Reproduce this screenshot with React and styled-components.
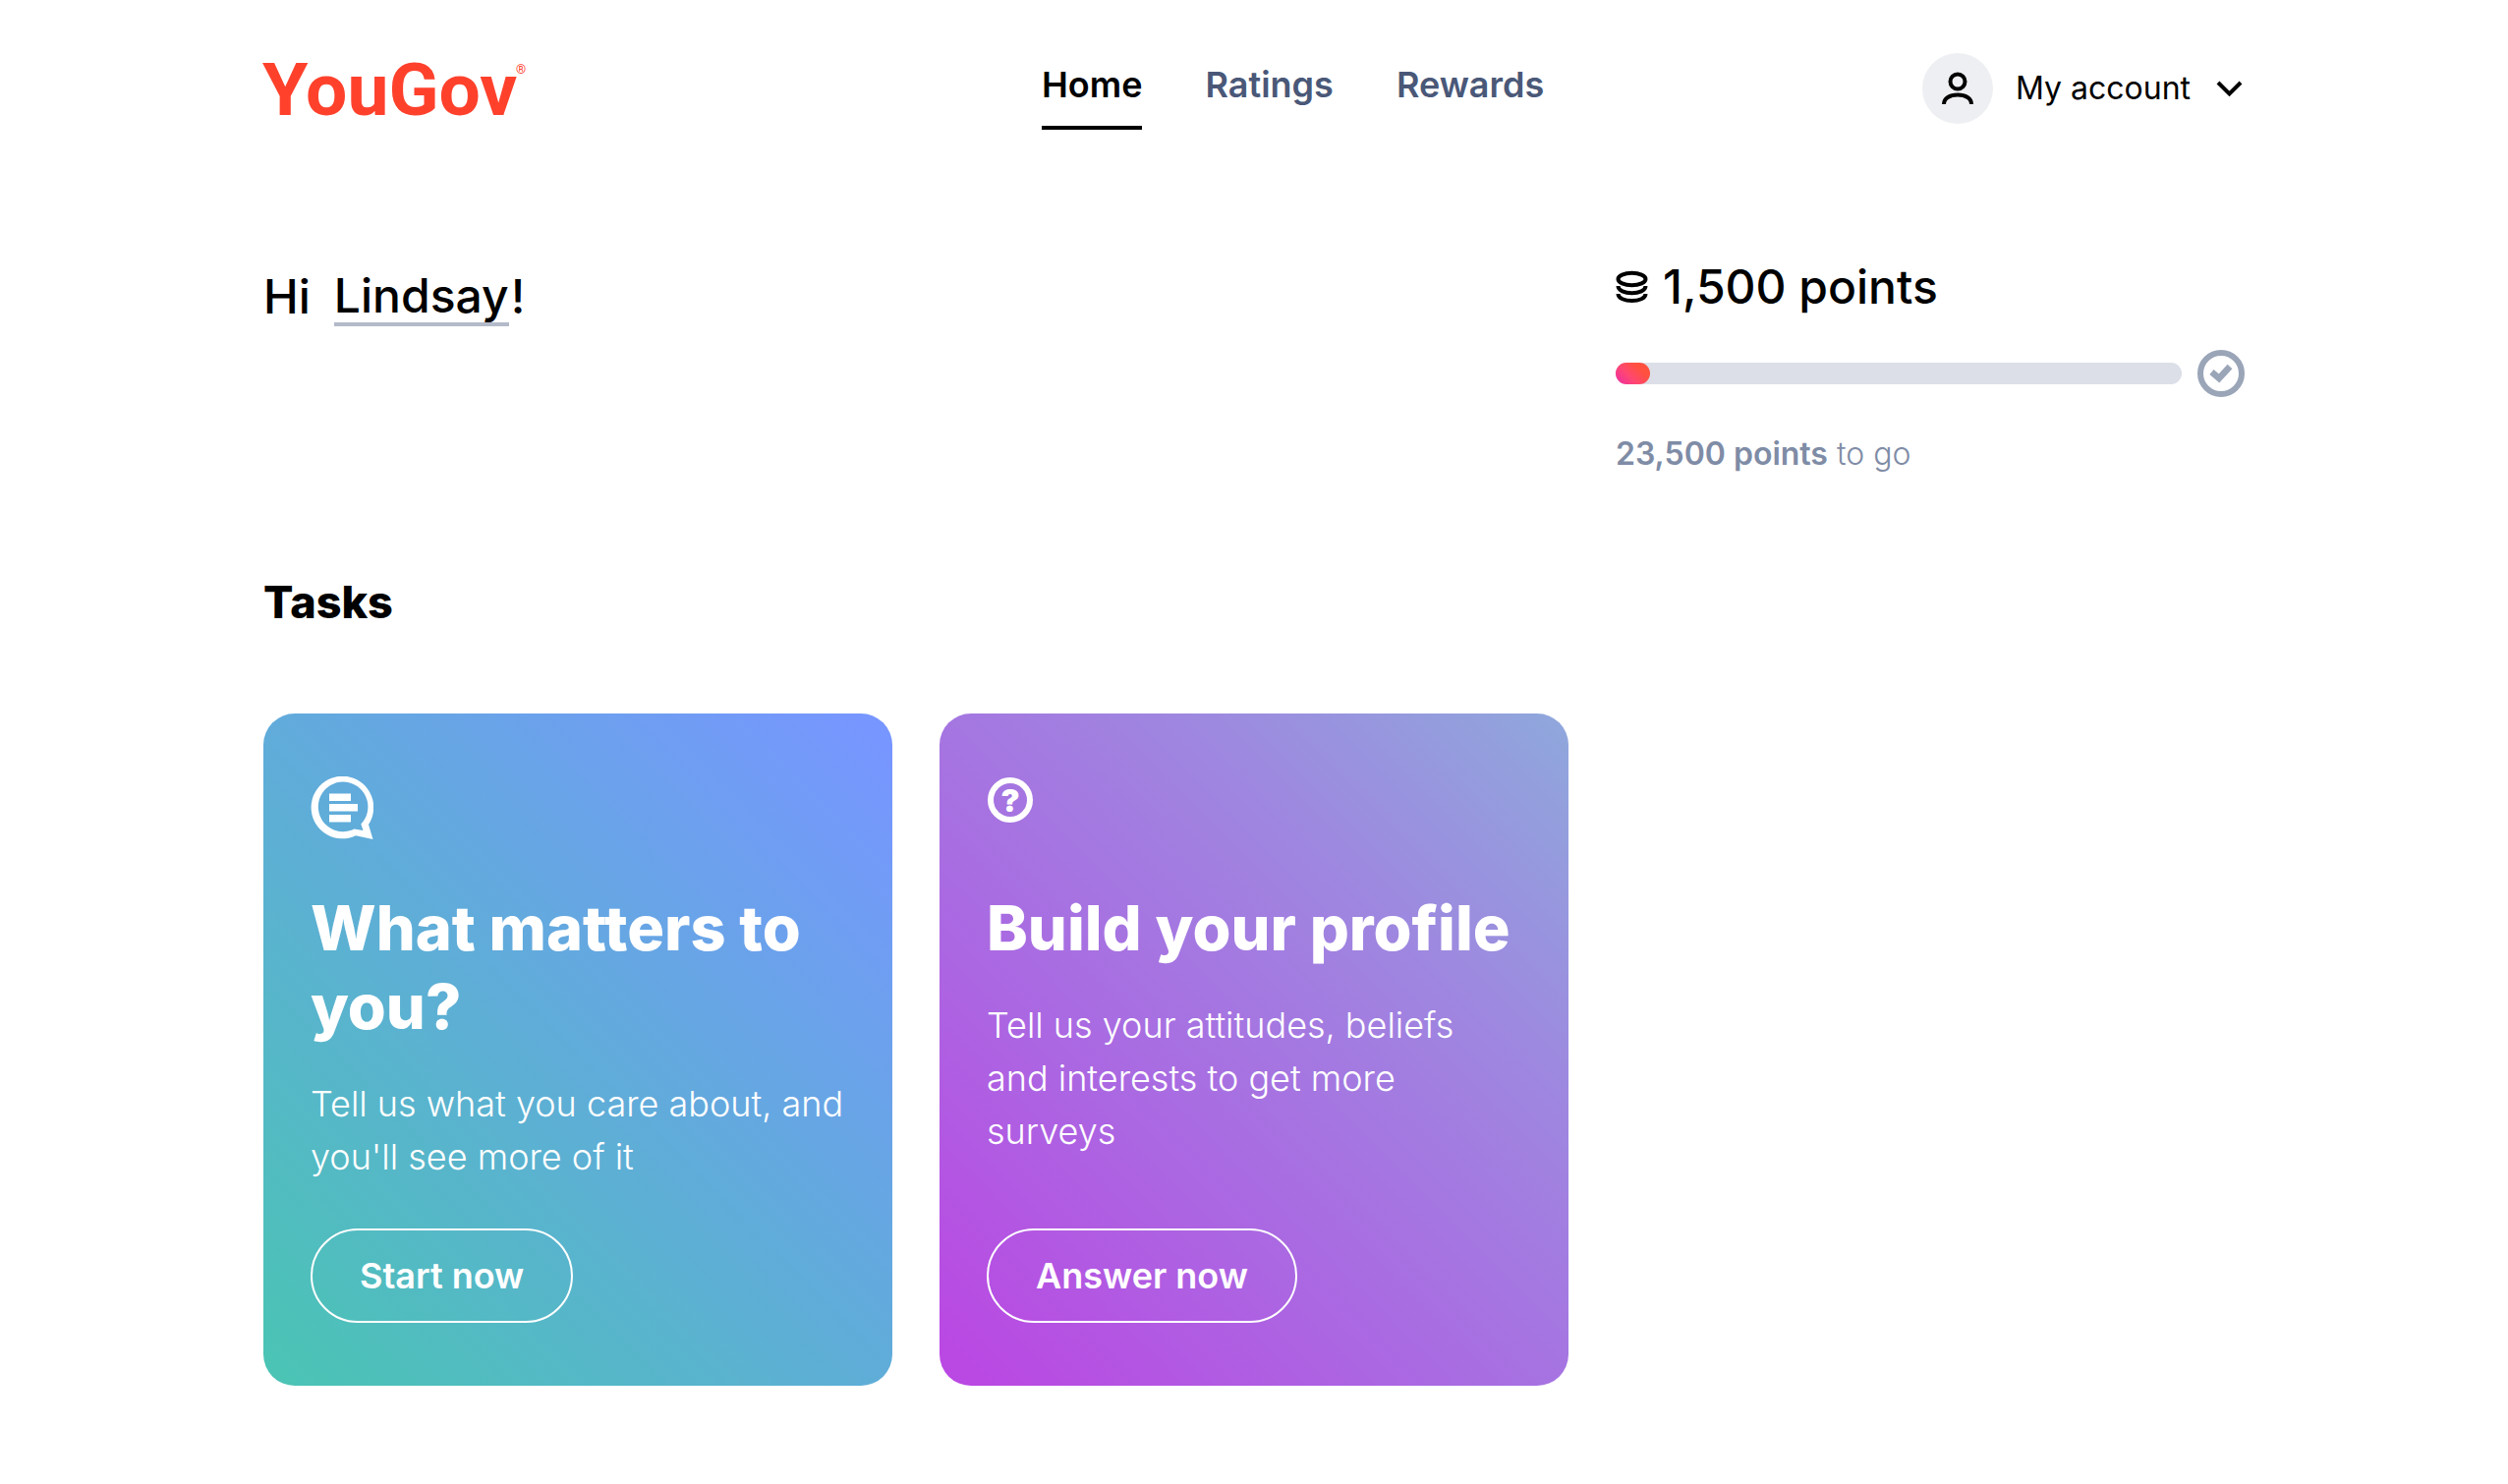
import React, { useState } from "react";
import styled, { createGlobalStyle } from "styled-components";

const GlobalStyle = createGlobalStyle`
  *, *::before, *::after { box-sizing: border-box; }
  body {
    margin: 0;
    background: #fff;
    color: #000;
    font-family: Inter, "Liberation Sans", Arial, sans-serif;
  }
  h1, h2, h3, p { margin: 0; }
  button, input { font-family: inherit; }
`;

const Page = styled.div`
  max-width: 2112px;
  margin: 0 auto;
  padding: 0 48px 100px;
`;

const Header = styled.header`
  display: grid;
  grid-template-columns: 10fr auto 9fr;
  align-items: center;
  height: 180px;
`;

const LogoLink = styled.a`
  justify-self: start;
  color: #ff412c;

  svg { display: block; }
`;

const Nav = styled.nav`
  display: flex;
  gap: 64px;
  padding-top: 16px;
`;

const NavLink = styled.a`
  padding: 0 0 20px;
  border-bottom: 4px solid ${({ $active }) => ($active ? "#000" : "transparent")};
  color: ${({ $active }) => ($active ? "#000" : "#4a5878")};
  font-size: 36px;
  font-weight: 600;
  line-height: 44px;
  text-decoration: none;
`;

const AccountButton = styled.button`
  display: flex;
  align-items: center;
  justify-self: end;
  gap: 23px;
  padding: 0;
  border: 0;
  background: none;
  color: #000;
  font-size: 32px;
  line-height: 48px;
  cursor: pointer;
`;

const Avatar = styled.span`
  display: grid;
  place-items: center;
  width: 72px;
  height: 72px;
  border-radius: 50%;
  background: #eeeff2;
`;

const Columns = styled.div`
  display: grid;
  grid-template-columns: repeat(3, minmax(0, 1fr));
  gap: 48px;
`;

const Summary = styled(Columns)`
  padding-top: 84px;
`;

const Greeting = styled.h1`
  display: flex;
  align-self: start;
  grid-column: span 2;
  padding-top: 8px;
  font-size: 48px;
  font-weight: 500;
  line-height: 60px;
`;

const NameInput = styled.input`
  width: 178px;
  height: 60px;
  margin: 0 2px 0 24px;
  padding: 0;
  border: 0;
  border-bottom: 4px solid #b3bac9;
  outline: none;
  background: none;
  color: inherit;
  font-size: inherit;
  font-weight: inherit;
`;

const PointsTotal = styled.h2`
  display: flex;
  align-items: center;
  gap: 14px;
  font-size: 48px;
  font-weight: 500;
  line-height: 56px;
`;

const ProgressRow = styled.div`
  display: flex;
  align-items: center;
  gap: 16px;
  margin-top: 36px;
`;

const Track = styled.div`
  flex: 1;
  height: 22px;
  border-radius: 11px;
  background: #dcdfe7;
`;

const Fill = styled.div`
  height: 100%;
  border-radius: 11px;
  background: linear-gradient(45deg, #ed2ca8 0%, #ff4770 40%, #ff5040 70%);
`;

const Remaining = styled.p`
  margin-top: 32px;
  color: #7f8ca6;
  font-size: 32px;
  font-weight: 300;
  line-height: 52px;

  b { font-weight: 600; }
`;

const SectionTitle = styled.h2`
  margin: 94px 0 82px;
  font-size: 45px;
  font-weight: 800;
  line-height: 62px;
`;

const Card = styled.article`
  display: flex;
  flex-direction: column;
  align-items: flex-start;
  padding: 64px 48px;
  border-radius: 32px;
  background: ${({ $background }) => $background};
  color: #fff;
`;

const CardIcon = styled.div`
  height: 64px;
  margin-bottom: 50px;
`;

const CardTitle = styled.h3`
  font-size: 63px;
  font-weight: 800;
  line-height: 80px;
`;

const CardText = styled.p`
  margin: 32px 0 46px;
  font-size: 36px;
  font-weight: 300;
  line-height: 54px;
`;

const CardButton = styled.button`
  height: 96px;
  margin-top: auto;
  padding: 0 48px;
  border: 2px solid #fff;
  border-radius: 48px;
  background: none;
  color: #fff;
  font-size: 36px;
  font-weight: 600;
  cursor: pointer;
`;

const LogoText = styled.text`
  font-family: Roboto, "Liberation Sans", sans-serif;
  font-size: ${({ $size }) => $size}px;
  font-weight: ${({ $weight }) => $weight};
`;

const Logo = () => (
  <svg width="270" height="60" viewBox="0 0 270 60" fill="currentColor" role="img" aria-label="YouGov" overflow="visible">
    <LogoText $size={75} $weight={700} x="-1" y="57">YouGov</LogoText>
    <LogoText $size={13} $weight={400} x="257" y="15">®</LogoText>
  </svg>
);

const UserIcon = () => (
  <svg width="32" height="34" viewBox="0 0 32 34" fill="none" stroke="currentColor" strokeWidth="4">
    <circle cx="16" cy="10" r="7.500" />
    <path d="M2 33c0-6 6-9.500 14-9.500S30 27 30 33" />
  </svg>
);

const ChevronIcon = () => (
  <svg width="32" height="24" viewBox="0 0 32 24" fill="none" stroke="currentColor" strokeWidth="4">
    <path d="M5 6l11.500 11.500L28 6" />
  </svg>
);

const CoinsIcon = () => (
  <svg width="34" height="34" viewBox="0 0 34 34" fill="none" stroke="currentColor" strokeWidth="4">
    <ellipse cx="16.500" cy="9" rx="14" ry="6.200" />
    <path d="M2.500 16c0 9.500 28 9.500 28 0M2.500 24c0 9.300 28 9.300 28 0" />
  </svg>
);

const GoalIcon = () => (
  <svg width="48" height="48" viewBox="0 0 48 48" fill="none" stroke="#9aa5b8" strokeWidth="6">
    <circle cx="24" cy="24" r="21" />
    <path d="M14.500 22.500l7.500 6.500 11-12" strokeWidth="6.500" />
  </svg>
);

const ChatIcon = () => (
  <svg width="64" height="64" viewBox="0 0 64 64" fill="currentColor" aria-hidden="true">
    <path
      fillRule="evenodd"
      d="M59 49A31.800 31.800 0 1 0 46 60.300L63.500 64ZM51.300 48.500A25.300 25.300 0 1 0 44.500 53.500L53.500 55Z"
    />
    <path d="M19 17.500h22v7.500H19ZM19 28h29v7.500H19ZM19 39h22v7.500H19Z" />
  </svg>
);

const QuestionMark = styled.text`
  font-family: Inter, sans-serif;
  font-size: 32px;
  font-weight: 900;
`;

const QuestionIcon = () => (
  <svg width="48" height="48" viewBox="0 0 48 48" fill="currentColor" aria-hidden="true">
    <circle cx="24" cy="24" r="20" fill="none" stroke="currentColor" strokeWidth="6" />
    <QuestionMark x="24" y="36" textAnchor="middle">?</QuestionMark>
  </svg>
);

const navItems = ["Home", "Ratings", "Rewards"];

const tasks = [
  {
    title: "What matters to you?",
    text: "Tell us what you care about, and you'll see more of it",
    action: "Start now",
    Icon: ChatIcon,
    background: "linear-gradient(45deg, #4bc3b5 3%, #5fadd8 48%, #7796ff 97%)",
  },
  {
    title: "Build your profile",
    text: "Tell us your attitudes, beliefs and interests to get more surveys",
    action: "Answer now",
    Icon: QuestionIcon,
    background: "linear-gradient(45deg, #ba48e3 3%, #ab67e2 35%, #9f85e0 68%, #8fa8dc 100%)",
  },
];

export default function App() {
  const [name, setName] = useState("Lindsay");
  const points = 1500;
  const goal = 25000;

  return (
    <>
      <GlobalStyle />
      <Page>
        <Header>
          <LogoLink href="#home"><Logo /></LogoLink>
          <Nav>
            {navItems.map((item, index) => (
              <NavLink key={item} href={`#${item.toLowerCase()}`} $active={index === 0}>{item}</NavLink>
            ))}
          </Nav>
          <AccountButton type="button">
            <Avatar><UserIcon /></Avatar>
            My account
            <ChevronIcon />
          </AccountButton>
        </Header>
        <main>
          <Summary>
            <Greeting>
              Hi
              <NameInput aria-label="Your name" value={name} onChange={(event) => setName(event.target.value)} />
              !
            </Greeting>
            <section>
              <PointsTotal><CoinsIcon />{points.toLocaleString("en-US")} points</PointsTotal>
              <ProgressRow>
                <Track role="progressbar" aria-label="Points" aria-valuenow={points} aria-valuemax={goal}>
                  <Fill style={{ width: `${(points / goal) * 100}%` }} />
                </Track>
                <GoalIcon />
              </ProgressRow>
              <Remaining><b>{(goal - points).toLocaleString("en-US")} points</b> to go</Remaining>
            </section>
          </Summary>
          <SectionTitle>Tasks</SectionTitle>
          <Columns>
            {tasks.map(({ title, text, action, Icon, background }) => (
              <Card key={title} $background={background}>
                <CardIcon><Icon /></CardIcon>
                <CardTitle>{title}</CardTitle>
                <CardText>{text}</CardText>
                <CardButton type="button">{action}</CardButton>
              </Card>
            ))}
          </Columns>
        </main>
      </Page>
    </>
  );
}
